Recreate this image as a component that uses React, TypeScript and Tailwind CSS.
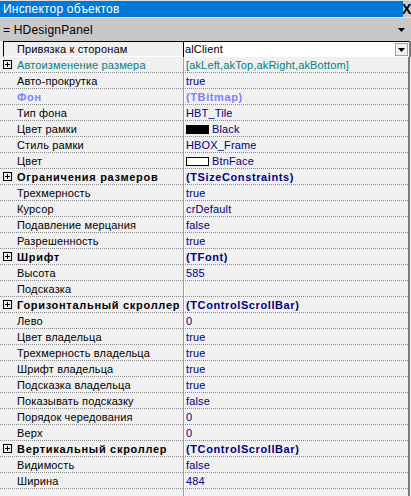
import React from 'react';

type Kind = 'normal' | 'bold' | 'teal' | 'fon';

type Prop = {
  name: string;
  value?: string;
  kind?: Kind;
  plus?: boolean;
  swatch?: 'black' | 'white';
};

const props: Prop[] = [
  { name: 'Автоизменение размера', value: '[akLeft,akTop,akRight,akBottom]', kind: 'teal', plus: true },
  { name: 'Авто-прокрутка', value: 'true' },
  { name: 'Фон', value: '(TBitmap)', kind: 'fon' },
  { name: 'Тип фона', value: 'HBT_Tile' },
  { name: 'Цвет рамки', value: 'Black', swatch: 'black' },
  { name: 'Стиль рамки', value: 'HBOX_Frame' },
  { name: 'Цвет', value: 'BtnFace', swatch: 'white' },
  { name: 'Ограничения размеров', value: '(TSizeConstraints)', kind: 'bold', plus: true },
  { name: 'Трехмерность', value: 'true' },
  { name: 'Курсор', value: 'crDefault' },
  { name: 'Подавление мерцания', value: 'false' },
  { name: 'Разрешенность', value: 'true' },
  { name: 'Шрифт', value: '(TFont)', kind: 'bold', plus: true },
  { name: 'Высота', value: '585' },
  { name: 'Подсказка', value: '' },
  { name: 'Горизонтальный скроллер', value: '(TControlScrollBar)', kind: 'bold', plus: true },
  { name: 'Лево', value: '0' },
  { name: 'Цвет владельца', value: 'true' },
  { name: 'Трехмерность владельца', value: 'true' },
  { name: 'Шрифт владельца', value: 'true' },
  { name: 'Подсказка владельца', value: 'true' },
  { name: 'Показывать подсказку', value: 'false' },
  { name: 'Порядок чередования', value: '0' },
  { name: 'Верх', value: '0' },
  { name: 'Вертикальный скроллер', value: '(TControlScrollBar)', kind: 'bold', plus: true },
  { name: 'Видимость', value: 'false' },
  { name: 'Ширина', value: '484' },
];

function PlusBox() {
  return (
    <svg width="9" height="9" viewBox="0 0 9 9" className="absolute left-[3px] top-[3px]">
      <rect x="0.5" y="0.5" width="8" height="8" fill="#f0f0f0" stroke="#000" />
      <path d="M2 4.5h5M4.5 2v5" stroke="#000" />
    </svg>
  );
}

function Row({ p }: { p: Prop }) {
  const kind = p.kind ?? 'normal';
  const nameCls =
    kind === 'bold'
      ? 'font-bold text-black tracking-[0.7px]'
      : kind === 'teal'
        ? 'text-[#008080] tracking-[0.15px]'
        : kind === 'fon'
          ? 'font-bold text-[#8080ff] tracking-[0.7px]'
          : 'text-black tracking-[0.15px]';
  const valueCls =
    kind === 'bold'
      ? 'font-bold text-[#000080] tracking-[0.6px]'
      : kind === 'teal'
        ? 'text-[#008080] tracking-[0.15px]'
        : kind === 'fon'
          ? 'font-bold text-[#8080ff] tracking-[0.6px]'
          : 'text-[#000080] tracking-[0.15px]';
  return (
    <div className="flex h-4">
      <div className="relative w-[183px] shrink-0 border-b border-dotted border-[#8c8c8c]">
        {p.plus && <PlusBox />}
        <span className={`absolute left-[17px] top-px leading-[15px] whitespace-nowrap ${nameCls}`}>{p.name}</span>
      </div>
      <div className="w-[2px] shrink-0 border-l border-[#a0a0a0] bg-white" />
      <div className="relative w-[223px] shrink-0 border-b border-dotted border-[#8c8c8c]">
        {p.swatch && (
          <span
            className={`absolute left-[1px] top-[4px] h-[9px] w-[23px] border border-black ${
              p.swatch === 'black' ? 'bg-black' : 'bg-white'
            }`}
          />
        )}
        <span
          className={`absolute top-px leading-[15px] whitespace-nowrap ${p.swatch ? 'left-[27px]' : 'left-[1px]'} ${valueCls}`}
        >
          {p.value}
        </span>
      </div>
      <div className="w-[2px] shrink-0 bg-[#7a7a7a]" />
    </div>
  );
}

export default function App() {
  return (
    <div
      className="w-[411px] h-[496px] overflow-hidden bg-[#f0f0f0] text-[11px]"
      style={{ fontFamily: '"Liberation Sans", Arial, sans-serif' }}
    >
      {/* title */}
      <div className="flex h-[17px] border-t border-[#dcdcdc] bg-[#0078d7]">
        <div className="flex-1 pl-[3px] text-[12px] leading-[16px] tracking-[0.2px] text-white">Инспектор объектов</div>
        <div className="w-[8px] overflow-hidden bg-[#c8c8c8] text-[14px] font-bold leading-[16px] text-black">
          <span className="block -ml-[1px]">X</span>
        </div>
      </div>
      <div className="h-px bg-[#e4e4e4]" />
      {/* object combo */}
      <div className="flex h-[23px] items-center justify-between bg-[#c8c8c8] pl-[3px] pr-[6px]">
        <span className="text-[12px] tracking-[0.2px] text-black">= HDesignPanel</span>
        <svg width="7" height="4" viewBox="0 0 7 4">
          <path d="M0 0h7L3.5 4z" fill="#000" />
        </svg>
      </div>
      {/* selected row */}
      <div className="flex h-4">
        <div className="w-[3px] shrink-0 bg-[#f0f0f0]" />
        <div className="relative w-[180px] shrink-0 border-l border-t border-b border-black border-b-white bg-[#f0f0f0]">
          <span className="absolute left-[13px] top-0 leading-[14px] whitespace-nowrap tracking-[0.15px] text-black">
            Привязка к сторонам
          </span>
        </div>
        <div className="w-px shrink-0 bg-black" />
        <div className="relative w-[225px] shrink-0 border-t border-black bg-white">
          <span className="absolute left-[1px] top-0 leading-[15px] tracking-[0.15px] text-black">alClient</span>
          <div className="absolute right-[1px] top-[1px] flex h-[13px] w-[13px] items-center justify-center border border-[#a0a0a0] bg-[#f0f0f0]">
            <svg width="7" height="4" viewBox="0 0 7 4">
              <path d="M0 0h7L3.5 4z" fill="#000" />
            </svg>
          </div>
        </div>
        <div className="w-[2px] shrink-0 bg-[#7a7a7a]" />
      </div>
      {props.map((p) => (
        <Row key={p.name} p={p} />
      ))}
      <div className="flex h-[8px]">
        <div className="w-[183px]" />
        <div className="w-[2px] border-l border-[#a0a0a0] bg-white" />
        <div className="w-[223px]" />
        <div className="w-[2px] bg-[#7a7a7a]" />
      </div>
    </div>
  );
}
